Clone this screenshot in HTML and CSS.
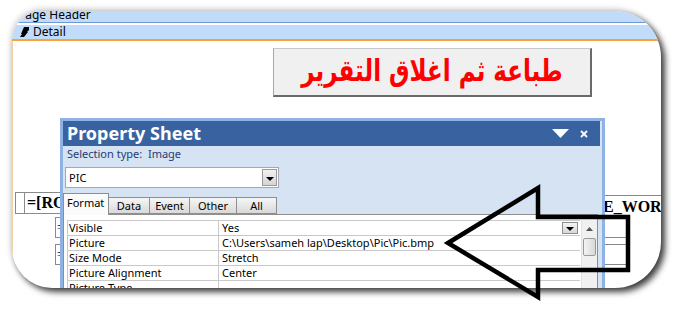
FILE: index.html
```html
<!DOCTYPE html>
<html lang="en">
<head>
<meta charset="utf-8">
<title>Report design</title>
<link rel="stylesheet" href="styles.css">
</head>
<body>
<div class="shot">
  <div class="band band-header"><span class="band-label">Page Header</span></div>
  <div class="band-sep"></div>
  <div class="band band-detail">
    <svg class="detail-icon" width="9" height="10" viewBox="0 0 9 10"><path d="M4 0H9V3L7 5H8L4 10H0L2 7H1Z" fill="#000"/></svg>
    <span class="band-label">Detail</span>
  </div>
  <div class="canvas">
    <div class="btn"><span class="btn-text" dir="rtl">طباعة ثم اغلاق التقرير</span></div>
    <div class="tb tb-ro"><span class="tb-inner">=[RO</span></div>
    <div class="tb tb-small tb-small1"><span>=</span></div>
    <div class="tb tb-small tb-small2"><span>=</span></div>
    <div class="tb tb-right"><span>E_WOR</span></div>

    <div class="sheet">
      <div class="sheet-title">
        <span class="sheet-title-text">Property Sheet</span>
        <svg class="t-drop" width="17" height="9" viewBox="0 0 17 9"><path d="M0 0H17L8.5 9Z" fill="#fff"/></svg>
        <svg class="t-close" width="8" height="8" viewBox="0 0 8 8"><path d="M1 1L7 7M7 1L1 7" stroke="#fff" stroke-width="1.8"/></svg>
      </div>
      <div class="sel-type">Selection type:&nbsp;&nbsp;Image</div>
      <div class="combo">
        <span class="combo-text">PIC</span>
        <span class="combo-btn"><svg width="8" height="4" viewBox="0 0 8 4"><path d="M0 0H8L4 4Z" fill="#000"/></svg></span>
      </div>
      <div class="tabs">
        <div class="tab tab-active tab-format">Format</div>
        <div class="tab tab-data">Data</div>
        <div class="tab tab-event">Event</div>
        <div class="tab tab-other">Other</div>
        <div class="tab tab-all">All</div>
      </div>
      <div class="panel">
        <div class="grid">
          <div class="row"><div class="c-name">Visible</div><div class="c-val">Yes<span class="val-btn"><svg width="8" height="4" viewBox="0 0 8 4"><path d="M0 0H8L4 4Z" fill="#000"/></svg></span></div></div>
          <div class="row"><div class="c-name">Picture</div><div class="c-val">C:\Users\sameh lap\Desktop\Pic\Pic.bmp</div></div>
          <div class="row"><div class="c-name">Size Mode</div><div class="c-val">Stretch</div></div>
          <div class="row"><div class="c-name">Picture Alignment</div><div class="c-val">Center</div></div>
          <div class="row"><div class="c-name">Picture Type</div><div class="c-val"></div></div>
        </div>
        <div class="scroll">
          <div class="sc-up"><svg width="7" height="4" viewBox="0 0 7 4"><path d="M0 4H7L3.5 0Z" fill="#555"/></svg></div>
          <div class="sc-thumb"></div>
        </div>
      </div>
    </div>
  </div>
</div>
<svg class="arrow" width="682" height="309" viewBox="0 0 682 309">
  <path d="M448 243L538 188V217H628V270H538V297Z" fill="none" stroke="#000" stroke-width="4.5" stroke-linejoin="miter"/>
</svg>
</body>
</html>
```
FILE: styles.css
```css
html, body {
  margin: 0;
  padding: 0;
}
body {
  width: 682px;
  height: 309px;
  overflow: hidden;
  background: #fff;
  font-family: "Noto Sans", "DejaVu Sans", sans-serif;
  position: relative;
}
.shot {
  position: relative;
  margin: 11px 0 0 12px;
  width: 649px;
  height: 277px;
  border-radius: 30px 46px 46px 40px;
  overflow: hidden;
  background: #fff;
  box-shadow: 4px 4px 6px rgba(0, 0, 0, 0.75), -1px -2px 6px rgba(0, 0, 0, 0.18);
}
.band {
  background: #c1dbfa;
  font-size: 11px;
  color: #000;
  overflow: hidden;
}
.band-header {
  height: 11px;
  padding-left: 6px;
}
.band-header .band-label {
  display: block;
  margin-top: -4px;
  line-height: 16px;
  font-size: 12px;
}
.band-sep {
  height: 2px;
  border-top: 1px solid #6d99d8;
  background: #fff;
}
.band-detail {
  height: 14px;
  border-bottom: 2px solid #f5a33a;
  display: flex;
  align-items: center;
  padding-left: 8px;
  gap: 4px;
}
.band-detail .band-label {
  font-size: 12px;
  line-height: 14px;
}
.detail-icon {
  display: block;
}
.canvas {
  position: relative;
  height: 247px;
  border-left: 1px solid #f1d3a8;
}
.btn {
  position: absolute;
  left: 260px;
  top: 7px;
  width: 319px;
  height: 49px;
  box-sizing: border-box;
  background: #f0f0f0;
  border-top: 1px solid #c8c8c8;
  border-left: 1px solid #a8a8a8;
  border-right: 2px solid #6a6a6a;
  border-bottom: 2px solid #6a6a6a;
  display: flex;
  align-items: center;
  justify-content: center;
}
.btn-text {
  display: inline-block;
  color: #ff0000;
  font-family: "DejaVu Sans", sans-serif;
  font-weight: bold;
  font-size: 23px;
  line-height: 30px;
  transform: scaleY(1.3);
  margin-top: -2px;
}
.tb {
  position: absolute;
  box-sizing: border-box;
  border: 1px solid #8a8a8a;
  font-family: "Liberation Serif", serif;
  font-weight: bold;
  font-size: 16px;
  color: #000;
}
.tb-ro {
  left: 2px;
  top: 151px;
  width: 400px;
  height: 22px;
  padding-left: 8px;
}
.tb-inner {
  display: block;
  height: 100%;
  border-left: 1px solid #8a8a8a;
  padding-left: 2px;
  line-height: 20px;
}
.tb-small {
  left: 42px;
  width: 572px;
  height: 21px;
  font-family: "Liberation Serif", serif;
  font-weight: normal;
  font-size: 14px;
  line-height: 19px;
  padding-left: 1px;
}
.tb-small1 { top: 176px; }
.tb-small2 { top: 203px; }
.tb-right {
  left: 590px;
  top: 154px;
  width: 120px;
  height: 22px;
  border-width: 1px 0 0 0;
  line-height: 22px;
}
.sheet {
  position: absolute;
  left: 47px;
  top: 77px;
  width: 545px;
  height: 220px;
  box-sizing: border-box;
  border: 3px solid #8fb2e4;
  background: #d5e3f2;
}
.sheet-title {
  height: 25px;
  background: #3863a0;
  display: flex;
  align-items: center;
  padding: 0 12px 0 4px;
  margin-right: 2px;
}
.sheet-title-text {
  flex: 1;
  color: #fff;
  font-weight: bold;
  font-size: 18px;
  line-height: 25px;
}
.t-drop { display: block; margin-right: 11px; }
.t-close { display: block; }
.sel-type {
  height: 15px;
  line-height: 15px;
  font-size: 11px;
  color: #1f3c74;
  padding-left: 4px;
  margin-bottom: 6px;
}
.combo {
  margin-left: 2px;
  width: 214px;
  height: 21px;
  box-sizing: border-box;
  border: 1px solid #a3a9b2;
  background: #fff;
  display: flex;
  align-items: center;
  justify-content: space-between;
  font-size: 11px;
}
.combo-text { padding-left: 3px; }
.combo-btn {
  width: 15px;
  height: 17px;
  margin-right: 1px;
  box-sizing: border-box;
  border: 1px solid #9a9a9a;
  background: linear-gradient(#f2f2f2, #d4d4d4);
  display: flex;
  align-items: center;
  justify-content: center;
}
.combo-btn svg { display: block; margin-top: 2px; }
.tabs {
  margin-top: 5px;
  height: 21px;
  display: flex;
  align-items: flex-end;
  position: relative;
  z-index: 1;
}
.tab {
  box-sizing: border-box;
  height: 17px;
  border: 1px solid #8e8e8e;
  border-left: none;
  background: linear-gradient(#f6f6f6, #d9d9d9);
  font-size: 11px;
  line-height: 15px;
  text-align: center;
  color: #000;
}
.tab-active {
  height: 22px;
  border-left: 1px solid #8e8e8e;
  border-bottom: none;
  background: #fbfbfb;
  text-align: left;
  padding-left: 3px;
  line-height: 17px;
  margin-bottom: -1px;
}
.tab-format { width: 46px; }
.tab-data { width: 41px; }
.tab-event { width: 40px; }
.tab-other { width: 47px; }
.tab-all { width: 40px; }
.panel {
  width: 535px;
  height: 120px;
  box-sizing: border-box;
  border: 1px solid #8e8e8e;
  background: #fff;
  display: flex;
  align-items: flex-start;
  padding: 5px 0 0 3px;
}
.grid {
  width: 513px;
  border-top: 1px solid #c9c9c9;
  border-left: 1px solid #c9c9c9;
  font-size: 11px;
}
.row {
  display: flex;
  height: 15px;
  border-bottom: 1px solid #c9c9c9;
  box-sizing: border-box;
  line-height: 14px;
}
.c-name {
  width: 151px;
  padding-left: 1px;
  box-sizing: border-box;
  border-right: 1px solid #c9c9c9;
  white-space: nowrap;
}
.c-val {
  flex: 1;
  padding-left: 3px;
  display: flex;
  align-items: center;
  white-space: nowrap;
}
.val-btn {
  margin-left: auto;
  margin-right: 2px;
  width: 16px;
  height: 12px;
  box-sizing: border-box;
  border: 1px solid #8e8e8e;
  background: linear-gradient(#f4f4f4, #d6d6d6);
  display: flex;
  align-items: center;
  justify-content: center;
}
.val-btn svg { display: block; margin-top: 2px; }
.scroll {
  margin-left: 1px;
  width: 16px;
  height: 110px;
  background: #f0f0f0;
  border-left: 1px solid #e2e2e2;
  box-sizing: border-box;
  padding-top: 2px;
}
.sc-up {
  height: 13px;
  display: flex;
  align-items: center;
  justify-content: center;
}
.sc-up svg { display: block; }
.sc-thumb {
  margin: 3px 1px 0 1px;
  height: 16px;
  border: 1px solid #9a9a9a;
  border-radius: 2px;
  background: linear-gradient(90deg, #f4f4f4, #d8d8d8);
}
.arrow {
  position: absolute;
  left: 0;
  top: 0;
  pointer-events: none;
}
```
